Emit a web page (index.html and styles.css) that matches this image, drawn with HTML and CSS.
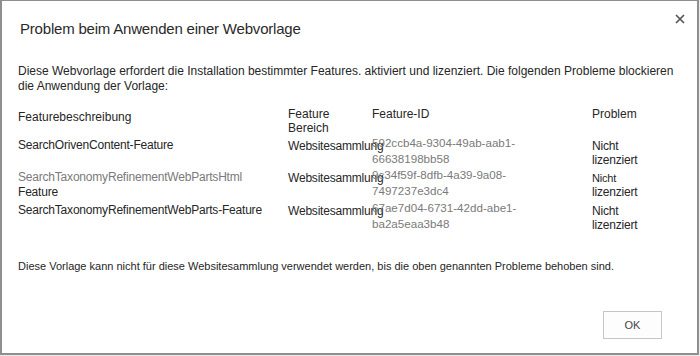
FILE: index.html
```html
<!DOCTYPE html>
<html lang="de">
<head>
    <meta charset="UTF-8">
    <title>Problem beim Anwenden einer Webvorlage</title>
    <link rel="stylesheet" href="styles.css">
</head>
<body>
    <div class="dialog">
        <div class="dialog-head">
            <h1 class="dialog-title">Problem beim Anwenden einer Webvorlage</h1>
            <span class="close-btn" title="Schließen">
                <svg width="10" height="10" viewBox="0 0 10 10">
                    <path d="M1 1 L9 9 M9 1 L1 9" stroke="#555" stroke-width="1.7" fill="none"/>
                </svg>
            </span>
        </div>

        <p class="intro">Diese Webvorlage erfordert die Installation bestimmter Features. aktiviert und lizenziert. Die folgenden Probleme blockieren die Anwendung der Vorlage:</p>

        <table class="feature-table">
            <colgroup>
                <col class="col-desc">
                <col class="col-scope">
                <col class="col-id">
                <col class="col-problem">
            </colgroup>
            <thead>
                <tr>
                    <th class="desc-head">Featurebeschreibung</th>
                    <th>Feature<br>Bereich</th>
                    <th>Feature-ID</th>
                    <th>Problem</th>
                </tr>
            </thead>
            <tbody>
                <tr>
                    <td class="desc">SearchOrivenContent-Feature</td>
                    <td class="scope">Websitesammlung</td>
                    <td class="fid">592ccb4a-9304-49ab-aab1-<br>66638198bb58</td>
                    <td class="problem">Nicht<br>lizenziert</td>
                </tr>
                <tr>
                    <td class="desc muted">SearchTaxonomyRefinementWebPartsHtml<br><span class="dark">Feature</span></td>
                    <td class="scope">Websitesammlung</td>
                    <td class="fid">9c34f59f-8dfb-4a39-9a08-<br>7497237e3dc4</td>
                    <td class="problem"><span class="small">Nicht</span><br>lizenziert</td>
                </tr>
                <tr>
                    <td class="desc">SearchTaxonomyRefinementWebParts-Feature</td>
                    <td class="scope">Websitesammlung</td>
                    <td class="fid">67ae7d04-6731-42dd-abe1-<br>ba2a5eaa3b48</td>
                    <td class="problem">Nicht<br>lizenziert</td>
                </tr>
            </tbody>
        </table>

        <p class="outro">Diese Vorlage kann nicht für diese Websitesammlung verwendet werden, bis die oben genannten Probleme behoben sind.</p>

        <div class="dialog-foot">
            <button class="ok-btn">OK</button>
        </div>
    </div>
</body>
</html>
```

FILE: styles.css
```css
body {
    margin: 0;
    background-color: #ececec;
    font-family: "Liberation Sans", Arial, sans-serif;
    color: #262626;
}

.dialog {
    box-sizing: border-box;
    width: 699px;
    height: 355px;
    background-color: #ffffff;
    border: 2px solid #8f8f8f;
    border-top-width: 1px;
}

.dialog-head {
    display: flex;
    justify-content: space-between;
    align-items: flex-start;
    padding: 13px 12px 0 18px;
}

.dialog-title {
    margin: 0;
    padding-top: 5px;
    font-size: 15px;
    letter-spacing: -0.2px;
    font-weight: normal;
    line-height: 20px;
    color: #2a2a2a;
}

.close-btn {
    display: flex;
}

.intro {
    margin: 25px 20px 0 16px;
    font-size: 12px;
    line-height: 15px;
}

.feature-table {
    margin: 13px 0 0 14px;
    border-collapse: collapse;
    table-layout: fixed;
    width: 664px;
    font-size: 12px;
    line-height: 15px;
}

.col-desc { width: 270px; }
.col-scope { width: 84px; }
.col-id { width: 220px; }
.col-problem { width: 90px; }

.feature-table th,
.feature-table td {
    padding: 4px 0 0 2px;
    text-align: left;
    vertical-align: top;
    font-weight: normal;
}

.feature-table th {
    padding-top: 0;
    line-height: 14px;
}

.feature-table th.desc-head {
    padding-top: 3px;
}

.feature-table td {
    letter-spacing: -0.2px;
}

.feature-table .desc {
    padding-top: 3px;
}

.feature-table .scope {
    white-space: nowrap;
    overflow: visible;
}

.feature-table .fid {
    padding-top: 0;
    color: #7a7a7a;
    font-size: 11.6px;
    line-height: 16px;
    letter-spacing: 0;
}

.feature-table .problem {
    line-height: 14px;
}

.muted {
    color: #7a7a7a;
}

.dark {
    color: #262626;
}

.small {
    font-size: 11px;
}

.outro {
    margin: 27px 0 0 16px;
    font-size: 11px;
    line-height: 15px;
}

.dialog-foot {
    display: flex;
    justify-content: flex-end;
    padding: 37px 35px 0 0;
}

.ok-btn {
    width: 59px;
    height: 28px;
    background-color: #fdfdfd;
    border: 1px solid #c6c6c6;
    font-family: "Liberation Sans", Arial, sans-serif;
    font-size: 11px;
    color: #444;
}
```
